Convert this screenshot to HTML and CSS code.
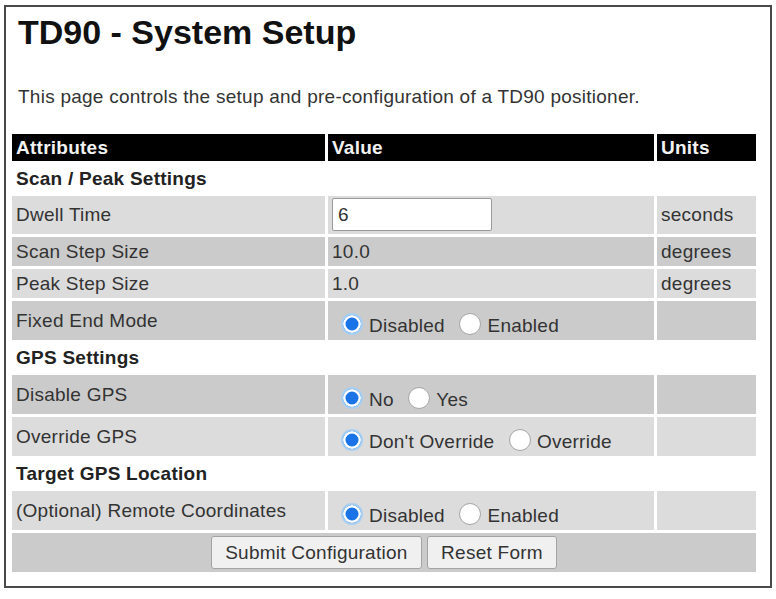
FILE: index.html
```html
<!DOCTYPE html>
<html lang="en">
<head>
    <meta charset="UTF-8">
    <title>TD90 - System Setup</title>
    <link rel="stylesheet" href="styles.css">
</head>
<body>
    <div class="frame">
        <h1 class="pageTitle">TD90 - System Setup</h1>
        <p class="intro">This page controls the setup and pre-configuration of a TD90 positioner.</p>

        <form id="setup">
            <table class="setupTable">
                <colgroup>
                    <col class="colAttr">
                    <col class="colValue">
                    <col class="colUnits">
                </colgroup>
                <tr class="headRow">
                    <th>Attributes</th>
                    <th>Value</th>
                    <th>Units</th>
                </tr>

                <!-- scan / peak -->
                <tr class="sectionRow">
                    <td colspan="3">Scan / Peak Settings</td>
                </tr>
                <tr class="inputRow light">
                    <td>Dwell Time</td>
                    <td><input type="text" class="textBox" id="dwell" value="6"></td>
                    <td>seconds</td>
                </tr>
                <tr class="dark">
                    <td>Scan Step Size</td>
                    <td>10.0</td>
                    <td>degrees</td>
                </tr>
                <tr class="light">
                    <td>Peak Step Size</td>
                    <td>1.0</td>
                    <td>degrees</td>
                </tr>
                <tr class="choiceRow dark">
                    <td>Fixed End Mode</td>
                    <td class="choice">
                        <input type="radio" class="radio" id="fixedOff" name="fixedEnd" checked><label for="fixedOff">Disabled</label>
                        <input type="radio" class="radio" id="fixedOn" name="fixedEnd"><label for="fixedOn">Enabled</label>
                    </td>
                    <td></td>
                </tr>

                <!-- gps -->
                <tr class="sectionRow">
                    <td colspan="3">GPS Settings</td>
                </tr>
                <tr class="choiceRow dark">
                    <td>Disable GPS</td>
                    <td class="choice">
                        <input type="radio" class="radio" id="gpsNo" name="disableGps" checked><label for="gpsNo">No</label>
                        <input type="radio" class="radio" id="gpsYes" name="disableGps"><label for="gpsYes">Yes</label>
                    </td>
                    <td></td>
                </tr>
                <tr class="choiceRow light">
                    <td>Override GPS</td>
                    <td class="choice">
                        <input type="radio" class="radio" id="keepGps" name="overrideGps" checked><label for="keepGps">Don't Override</label>
                        <input type="radio" class="radio" id="setGps" name="overrideGps"><label for="setGps">Override</label>
                    </td>
                    <td></td>
                </tr>

                <!-- target -->
                <tr class="sectionRow">
                    <td colspan="3">Target GPS Location</td>
                </tr>
                <tr class="choiceRow light">
                    <td>(Optional) Remote Coordinates</td>
                    <td class="choice">
                        <input type="radio" class="radio" id="remoteOff" name="remote" checked><label for="remoteOff">Disabled</label>
                        <input type="radio" class="radio" id="remoteOn" name="remote"><label for="remoteOn">Enabled</label>
                    </td>
                    <td></td>
                </tr>

                <tr class="buttonRow dark">
                    <td colspan="3">
                        <button type="submit" class="formBtn">Submit Configuration</button>
                        <button type="reset" class="formBtn">Reset Form</button>
                    </td>
                </tr>
            </table>
        </form>
    </div>
</body>
</html>
```

FILE: styles.css
```css
body{
    margin: 0;
    font-family: "Liberation Sans", Arial, sans-serif;
    color: #333;
    background: #fff;
}

.frame{
    width: 764px;
    margin: 5px 0 0 4px;
    border: 2px solid #4a4a4a;
    padding: 0 0 11px 0;
}

.pageTitle{
    margin: 6px 0 0 12px;
    font-size: 34px;
    line-height: 38px;
    color: #111;
}
.intro{
    margin: 35px 0 24px 12px;
    font-size: 19px;
    line-height: 21px;
    letter-spacing: 0.25px;
}

/* table */
.setupTable{
    width: 750px;
    margin-left: 3px;
    table-layout: fixed;
    border-spacing: 3px;
    font-size: 19px;
    line-height: 21px;
    letter-spacing: 0.25px;
}
.colAttr{
    width: 313px;
}
.colValue{
    width: 326px;
}
.colUnits{
    width: 99px;
}
.setupTable th,
.setupTable td{
    padding: 4px;
    text-align: left;
    vertical-align: middle;
}
.headRow th{
    padding: 3px 4px;
    background: #000;
    color: #f2f2f2;
}
.sectionRow td{
    font-weight: bold;
    color: #222;
}
.light td{
    background: #dcdcdc;
}
.dark td{
    background: #cbcbcb;
}

.inputRow td{
    padding: 2px 4px 3px;
}
.textBox{
    display: block;
    box-sizing: border-box;
    width: 160px;
    height: 33px;
    margin: 0;
    padding: 0 5px;
    border: 1px solid #9a9a9a;
    border-radius: 2px;
    background: #fff;
    font: 19px "Liberation Sans", Arial, sans-serif;
    color: #333;
}

.choiceRow{
    height: 39px;
}
.setupTable .choice{
    white-space: nowrap;
    vertical-align: bottom;
    padding: 0 4px 4px;
}
.radio{
    -webkit-appearance: none;
    appearance: none;
    box-sizing: border-box;
    width: 22px;
    height: 22px;
    margin: 0 6px 0 9px;
    border: 1px solid #a5a5a5;
    border-radius: 50%;
    background: #fff;
    vertical-align: -3px;
}
.radio:checked{
    border: 2px solid #a8cff2;
    background: #1a74e8;
    box-shadow: inset 0 0 0 2.5px #fff;
}

.buttonRow{
    height: 39px;
}
.buttonRow td{
    text-align: center;
    padding: 2px 4px;
}
.formBtn{
    height: 33px;
    margin: 0;
    padding: 0 13px;
    border: 1px solid #a3a3a3;
    border-radius: 3px;
    background: #f0f0f0;
    font: 19px "Liberation Sans", Arial, sans-serif;
    letter-spacing: 0.25px;
    color: #333;
}
```
